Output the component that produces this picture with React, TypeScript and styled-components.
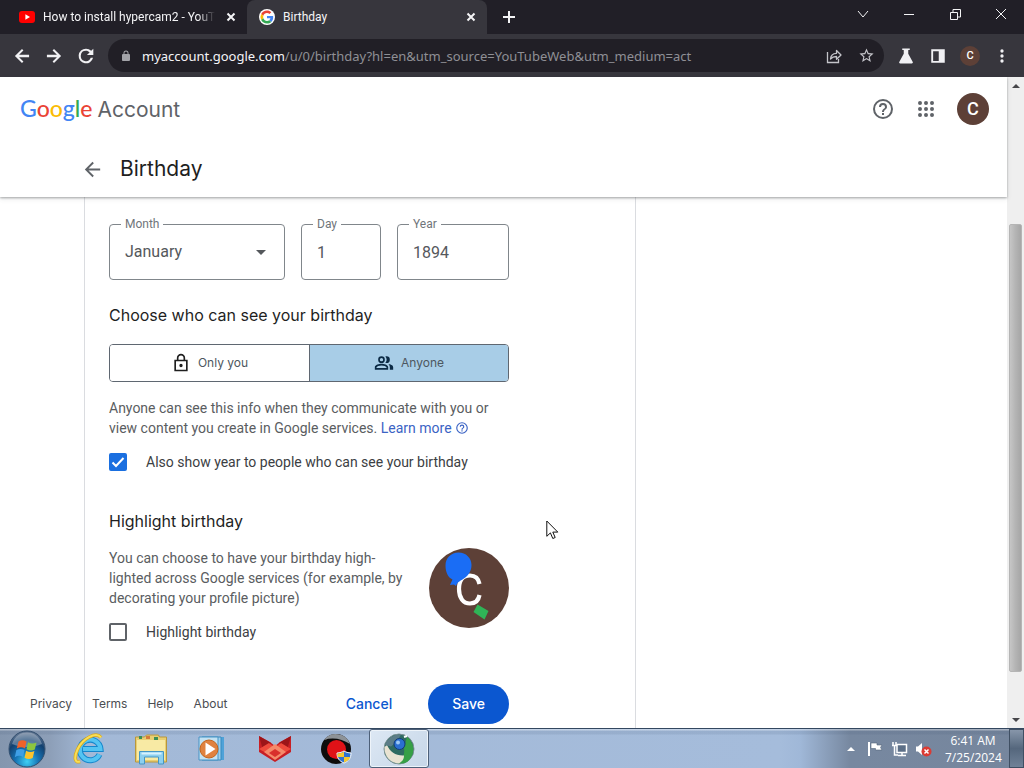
import React, { useState } from 'react';
import styled, { createGlobalStyle, css } from 'styled-components';

const GlobalStyle = createGlobalStyle`
  *, *::before, *::after { box-sizing: border-box; }
  body { margin: 0; background: #fff; }
  button, input, select { font: inherit; color: inherit; }
  button { border: 0; padding: 0; background: none; cursor: pointer; }
  svg { display: block; flex: none; }
  h1, h2, p { margin: 0; font-weight: 400; }
  a { color: inherit; text-decoration: none; }
`;

const chromeFont = `"Noto Sans", "Open Sans", sans-serif`;
const clockFont = `"Open Sans", "Noto Sans", sans-serif`;
const pageFont = `Inter, Roboto, sans-serif`;
const formFont = `Roboto, Inter, sans-serif`;

const Desktop = styled.div`
  display: flex;
  flex-direction: column;
  height: 100vh;
  overflow: hidden;
  font-family: ${pageFont};
`;

/* ---------- browser chrome ---------- */

const TabStrip = styled.div`
  display: flex;
  flex: none;
  height: 34px;
  background: #211f27;
  color: #f4f4f6;
  font: 12px/16px ${formFont};
`;

const Tab = styled.div<{ $active?: boolean }>`
  display: flex;
  align-items: center;
  gap: 8px;
  flex: 0 1 240px;
  min-width: 0;
  padding: 0 8px 0 12px;
  border-radius: 8px 8px 0 0;
  background: ${p => (p.$active ? '#37363d' : 'transparent')};
  ${p => !p.$active && css`margin-left: 7px;`}
`;

const TabTitle = styled.span<{ $fade?: boolean }>`
  flex: 1;
  min-width: 0;
  overflow: hidden;
  white-space: nowrap;
  ${p => p.$fade && css`mask-image: linear-gradient(90deg, #000 90%, transparent);`}
`;

const TabClose = styled.button`
  display: grid;
  place-items: center;
  width: 16px;
  height: 16px;
`;

const NewTab = styled.button`
  display: grid;
  place-items: center;
  width: 28px;
  height: 34px;
  margin-left: 8px;
`;

const WindowControls = styled.div`
  display: flex;
  margin-left: auto;
`;

const WindowButton = styled.button`
  display: grid;
  place-items: center;
  width: 46px;
  height: 28px;
`;

const Toolbar = styled.div`
  display: flex;
  align-items: center;
  flex: none;
  height: 43px;
  padding: 0 6px;
  background: #37363d;
  color: #f1f1f4;
`;

const ToolButton = styled.button<{ $muted?: boolean }>`
  display: grid;
  place-items: center;
  flex: none;
  width: 32px;
  height: 32px;
  color: ${p => (p.$muted ? '#c4c4c9' : 'inherit')};
`;

const Omnibox = styled.div`
  display: flex;
  align-items: center;
  flex: 1;
  min-width: 0;
  height: 33px;
  margin: 0 6px;
  padding: 0 2px 0 12px;
  border-radius: 17px;
  background: #211f26;
  color: #a3a3a8;
  font: 13px/20px ${chromeFont};
`;

const Address = styled.span`
  flex: 1;
  min-width: 0;
  margin-left: 10px;
  overflow: hidden;
  white-space: nowrap;
  color: #8f8f95;
`;

const Host = styled.span`
  color: #f4f4f6;
`;

const Avatar = styled.span<{ $size: number }>`
  display: grid;
  place-items: center;
  width: ${p => p.$size}px;
  height: ${p => p.$size}px;
  border-radius: 50%;
  background: #5d4037;
  color: #fff;
  font: 500 ${p => (p.$size > 24 ? 18 : 11)}px/1 ${formFont};
`;

/* ---------- page ---------- */

const Viewport = styled.div`
  display: flex;
  flex: 1;
  min-height: 0;
`;

const Page = styled.div`
  display: flex;
  flex-direction: column;
  flex: 1;
  min-width: 0;
  background: #fff;
`;

const Header = styled.header`
  position: relative;
  flex: none;
  background: #fff;
  box-shadow: 0 1px 2px rgba(60, 64, 67, 0.4), 0 2px 5px rgba(60, 64, 67, 0.12);
`;

const Masthead = styled.div`
  display: flex;
  align-items: center;
  gap: 19px;
  height: 64px;
  padding: 0 18px 0 20px;
  color: #5f6368;
`;

const Brand = styled.a`
  display: flex;
  align-items: baseline;
  gap: 5px;
  margin-right: auto;
  font-size: 21px;
  line-height: 32px;
`;

const Wordmark = styled.span`
  font: 500 23px/32px Lato, sans-serif;
`;

const Letter = styled.span<{ $color: string }>`
  color: ${p => p.$color};
`;

const IconButton = styled.button`
  display: grid;
  place-items: center;
  min-width: 22px;
  height: 32px;
`;

const TitleBar = styled.div`
  display: flex;
  align-items: center;
  gap: 16px;
  height: 56px;
  padding-left: 81px;
  color: #5f6368;
`;

const PageTitle = styled.h1`
  color: #1f1f1f;
  font-size: 21px;
  line-height: 28px;
`;

const Body = styled.div`
  display: grid;
  flex: 1;
  min-height: 0;
  overflow: hidden;
  > * { grid-area: 1 / 1; }
`;

const Card = styled.form`
  width: calc(100% - 84px);
  max-width: 552px;
  margin-left: 84px;
  padding: 27px 24px 4px;
  border: solid #dadce0;
  border-width: 0 1px;
`;

const Column = styled.div`
  display: flex;
  flex-direction: column;
  max-width: 400px;
`;

const Fields = styled.div`
  display: grid;
  grid-template-columns: 176fr 80fr 112fr;
  gap: 16px;
`;

const Field = styled.div`
  position: relative;
  display: flex;
  align-items: center;
  height: 56px;
  border: 1px solid #80868b;
  border-radius: 4px;
  color: #55585c;
  font: 16px/24px ${formFont};
`;

const FieldLabel = styled.label`
  position: absolute;
  top: -9px;
  left: 11px;
  padding: 0 4px;
  background: #fff;
  color: #70757a;
  font-size: 12px;
  line-height: 16px;
`;

const control = css`
  width: 100%;
  height: 100%;
  padding: 0 15px;
  border: 0;
  outline: 0;
  background: none;
  appearance: none;
`;

const TextInput = styled.input`${control}`;
const Select = styled.select`${control}`;

const SelectArrow = styled.svg`
  position: absolute;
  right: 18px;
  pointer-events: none;
`;

const SectionTitle = styled.h2<{ $top: number }>`
  margin-top: ${p => p.$top}px;
  color: #1f1f1f;
  font-size: 16px;
  line-height: 24px;
`;

const Segments = styled.div`
  display: grid;
  grid-template-columns: 1fr 1fr;
  height: 38px;
  margin-top: 17px;
  overflow: hidden;
  border: 1px solid #5f6771;
  border-radius: 4px;
`;

const Segment = styled.button<{ $on: boolean }>`
  display: flex;
  align-items: center;
  justify-content: center;
  gap: 7px;
  background: ${p => (p.$on ? '#a8cde7' : '#fff')};
  color: ${p => (p.$on ? '#0b2a45' : '#1f1f1f')};
  font-size: 12px;
  line-height: 16px;
  & + & { border-left: 1px solid #5f6771; }
`;

const SegmentText = styled.span`
  color: #4d5760;
`;

const Copy = styled.p<{ $top?: number }>`
  margin-top: ${p => p.$top ?? 0}px;
  color: #5a5d61;
  font: 14px/20px ${formFont};
`;

const LearnMore = styled.a`
  display: inline-flex;
  align-items: center;
  gap: 3px;
  color: #3b63c4;
  white-space: nowrap;
`;

const CheckRow = styled.div`
  display: flex;
  align-items: center;
  gap: 19px;
  height: 24px;
  margin-top: 12px;
  color: #3c4043;
  font: 14px/20px ${formFont};
`;

const CheckBox = styled.span`
  display: grid;
  flex: none;
  width: 18px;
  height: 18px;
  > * { grid-area: 1 / 1; }
  svg { pointer-events: none; }
`;

const CheckInput = styled.input`
  width: 18px;
  height: 18px;
  margin: 0;
  border: 2px solid #5f6368;
  border-radius: 2px;
  appearance: none;
  &:checked { border-color: #1a6fe0; background: #1a6fe0; }
  &:not(:checked) + svg { visibility: hidden; }
`;

const HighlightRow = styled.div`
  display: flex;
  justify-content: space-between;
  margin-top: 15px;
`;

const Actions = styled.div`
  display: flex;
  justify-content: flex-end;
  gap: 24px;
  margin-top: 40px;
  font-weight: 500;
  font-size: 14px;
  line-height: 20px;
`;

const CancelButton = styled.button`
  height: 40px;
  padding: 0 12px;
  color: #0b57d0;
`;

const SaveButton = styled.button`
  height: 40px;
  padding: 0 24px;
  border-radius: 20px;
  background: #0b57d0;
  color: #fff;
`;

const FooterLinks = styled.nav`
  display: flex;
  align-self: end;
  justify-self: start;
  gap: 20px;
  padding: 0 0 16px 30px;
  color: #4b4e52;
  font: 12px/16px ${pageFont};
`;

const ScrollBar = styled.div`
  display: flex;
  flex-direction: column;
  flex: none;
  width: 17px;
  background: #efefef;
  color: #46464a;
`;

const ScrollArrow = styled.button`
  display: grid;
  place-items: center;
  height: 17px;
`;

const ScrollTrack = styled.div`
  display: grid;
  flex: 1;
  grid-template-rows: 130fr 448fr 39fr;
`;

const ScrollThumb = styled.div`
  grid-row: 2;
  margin: 0 2px;
  border: 1px solid #b5b5b5;
  border-radius: 2px;
  background: linear-gradient(90deg, #c6c6c6, #b4b4b4 50%, #a6a6a6);
`;

const Pointer = styled.svg`
  position: absolute;
  top: 520px;
  left: 546px;
  pointer-events: none;
`;

/* ---------- taskbar ---------- */

const Taskbar = styled.div`
  display: flex;
  align-items: stretch;
  flex: none;
  height: 40px;
  border-top: 1px solid #33475f;
  background:
    linear-gradient(180deg, rgba(255, 255, 255, 0.35) 0 1px, rgba(60, 80, 110, 0.12) 2px 5px, transparent 6px),
    linear-gradient(90deg, #8496ae, #8d9fb8 50px, #a3b9d7 90px, #a5bcdb 780px, #a0b8d8 800px, #7788a0 850px, #76869d);
`;

const StartButton = styled.button`
  display: grid;
  place-items: center;
  width: 54px;
  margin-right: 5px;
`;

const TaskButton = styled.button<{ $active?: boolean }>`
  display: grid;
  place-items: center;
  width: 60px;
  margin-right: 2px;
  ${p =>
    p.$active &&
    css`
      border: 1px solid #4d6079;
      border-radius: 3px;
      background: linear-gradient(135deg, #dde8f4, #c6d6e8);
      box-shadow: inset 0 0 0 1px #eef4fa;
    `}
`;

const Tray = styled.div`
  display: flex;
  align-items: center;
  gap: 8px;
  margin-left: auto;
`;

const TrayButton = styled.button`
  display: grid;
  place-items: center;
  width: 16px;
  height: 24px;
`;

const Clock = styled.time`
  width: 56px;
  margin-left: 6px;
  color: #fff;
  font: 12px/17px ${clockFont};
  text-align: center;
  white-space: nowrap;
`;

const ShowDesktop = styled.button`
  align-self: stretch;
  width: 15px;
  border: 1px solid #3f4f63;
  background: linear-gradient(180deg, #8796aa, #55677d 50%, #708197);
`;

/* ---------- icons ---------- */

type GlyphProps = { d: string; size?: number; box?: number };
const Glyph = ({ d, size = 20, box = 24 }: GlyphProps) => (
  <svg width={size} height={size} viewBox={`0 0 ${box} ${box}`} fill="currentColor" aria-hidden="true">
    <path d={d} />
  </svg>
);

type StrokeProps = { d: string; size: number; w?: number };
const Stroke = ({ d, size, w = 1 }: StrokeProps) => (
  <svg width={size} height={size} viewBox={`0 0 ${size} ${size}`} fill="none" stroke="currentColor" strokeWidth={w} aria-hidden="true">
    <path d={d} />
  </svg>
);

const paths = {
  back: 'M20 11H7.83l5.59-5.59L12 4l-8 8 8 8 1.41-1.41L7.83 13H20v-2z',
  backBold: 'M20.500 10.500H8.500l5.200-5.200L12 3.500 3.500 12l8.500 8.500 1.700-1.800-5.200-5.200h12z',
  forwardBold: 'M3.500 10.500h12l-5.200-5.200L12 3.500l8.500 8.500-8.500 8.500-1.700-1.800 5.200-5.200h-12z',
  reload: 'M17.650 6.350A7.960 7.960 0 0 0 12 4a8 8 0 1 0 7.730 10h-2.600A5.600 5.600 0 1 1 12 6.400c1.540 0 2.900.640 3.900 1.700L13 11h7V4l-2.350 2.350z',
  lock: 'M18 8h-1V6A5 5 0 0 0 7 6v2H6a2 2 0 0 0-2 2v10c0 1.1.9 2 2 2h12a2 2 0 0 0 2-2V10a2 2 0 0 0-2-2zM8.900 6a3.100 3.100 0 0 1 6.200 0v2H8.900z',
  star: 'M22 9.24l-7.19-.62L12 2 9.19 8.630 2 9.240l5.460 4.730L5.820 21 12 17.270 18.180 21l-1.630-7.030L22 9.240zM12 15.400l-3.760 2.270 1-4.280-3.320-2.880 4.380-.380L12 6.100l1.710 4.040 4.380.380-3.320 2.880 1 4.280L12 15.400z',
  flask: 'M7 2h10v2h-2v5l6 11c.5 1-.2 2-1.300 2H4.300C3.200 22 2.500 21 3 20L9 9V4H7z',
  panel: 'M3 3h18v18H3zM5.500 5.500v13H13v-13z',
  dots: 'M12 8a2 2 0 1 0 0-4 2 2 0 0 0 0 4zm0 2a2 2 0 1 0 0 4 2 2 0 0 0 0-4zm0 6a2 2 0 1 0 0 4 2 2 0 0 0 0-4z',
  help: 'M11 18h2v-2h-2v2zm1-16a10 10 0 1 0 0 20 10 10 0 0 0 0-20zm0 18a8 8 0 1 1 0-16 8 8 0 0 1 0 16zm0-14a4 4 0 0 0-4 4h2a2 2 0 1 1 4 0c0 2-3 1.750-3 5h2c0-2.250 3-2.500 3-5a4 4 0 0 0-4-4z',
  apps: 'M6 8a2 2 0 1 0 0-4 2 2 0 0 0 0 4zm6 0a2 2 0 1 0 0-4 2 2 0 0 0 0 4zm6 0a2 2 0 1 0 0-4 2 2 0 0 0 0 4zM6 14a2 2 0 1 0 0-4 2 2 0 0 0 0 4zm6 0a2 2 0 1 0 0-4 2 2 0 0 0 0 4zm6 0a2 2 0 1 0 0-4 2 2 0 0 0 0 4zM6 20a2 2 0 1 0 0-4 2 2 0 0 0 0 4zm6 0a2 2 0 1 0 0-4 2 2 0 0 0 0 4zm6 0a2 2 0 1 0 0-4 2 2 0 0 0 0 4z',
  lockOutline: 'M18 8h-1V6A5 5 0 0 0 7 6v2H4v14h16V8h-2zM9 6a3 3 0 0 1 6 0v2H9V6zm9 14H6V10h12v10zm-6-3a2 2 0 1 0 0-4 2 2 0 0 0 0 4z',
  people: 'M9 12a4 4 0 1 0 0-8 4 4 0 0 0 0 8zm0-6a2 2 0 1 1 0 4 2 2 0 0 1 0-4zm0 7c-2.670 0-8 1.340-8 4v3h16v-3c0-2.660-5.330-4-8-4zm6 5H3v-.990C3.200 16.290 6.300 15 9 15s5.800 1.290 6 2v1zM15 12a4 4 0 1 0 0-8c-.470 0-.910.100-1.330.240a5.980 5.980 0 0 1 0 7.520c.420.140.860.240 1.330.240zM17 13.300c1.200.900 2 2.100 2 3.700v3h4v-3c0-2.180-3.580-3.400-6-3.700z',
};

const YouTubeIcon = () => (
  <svg width="16" height="16" viewBox="0 0 16 16" aria-hidden="true">
    <rect y="2" width="16" height="12" rx="3" fill="#f00" />
    <path d="M6.400 5.200v5.600L11 8z" fill="#fff" />
  </svg>
);

const GoogleIcon = () => (
  <svg width="16" height="16" viewBox="0 0 48 48" aria-hidden="true">
    <circle cx="24" cy="24" r="24" fill="#fff" />
    <g transform="translate(4.500 4.500) scale(.81)">
      <path fill="#ea4335" d="M24 9.500c3.540 0 6.710 1.220 9.210 3.600l6.850-6.850C35.900 2.380 30.470 0 24 0 14.620 0 6.510 5.380 2.560 13.220l7.980 6.190C12.430 13.720 17.740 9.500 24 9.500z" />
      <path fill="#4285f4" d="M46.980 24.550c0-1.570-.150-3.090-.380-4.550H24v9.020h12.940c-.580 2.960-2.260 5.480-4.780 7.180l7.730 6c4.510-4.180 7.090-10.360 7.090-17.650z" />
      <path fill="#fbbc05" d="M10.530 28.590a14.500 14.500 0 0 1 0-9.180l-7.980-6.190a24 24 0 0 0 0 21.560l7.980-6.190z" />
      <path fill="#34a853" d="M24 48c6.480 0 11.930-2.130 15.890-5.810l-7.730-6c-2.150 1.450-4.920 2.300-8.160 2.300-6.260 0-11.570-4.220-13.470-9.910l-7.980 6.190C6.510 42.620 14.620 48 24 48z" />
    </g>
  </svg>
);

const ShareIcon = () => (
  <svg width="18" height="18" viewBox="0 0 18 18" fill="none" stroke="currentColor" strokeWidth="1.300" aria-hidden="true">
    <path d="M2.500 5v10.500h11V12" />
    <path d="M5.500 12c.300-3.800 2.600-5.600 6-5.700V3.500L16 8l-4.500 4.300V9.500c-2.700 0-4.500.700-6 2.500z" strokeLinejoin="round" />
  </svg>
);

const BirthdayAvatar = () => (
  <svg width="80" height="80" viewBox="0 0 80 80" role="img" aria-label="Profile picture with decorations">
    <circle cx="40" cy="40" r="40" fill="#5d4037" />
    <path d="M50.500 36C49.500 30.500 46 27.500 41 27.500c-7 0-11 5-11 13.500S34 55.500 41 55.500c5 0 8.500-3 9.500-8.500" fill="none" stroke="#fff" strokeWidth="4.200" />
    <path d="M29.500 4.500c7.500 0 13 5.500 13 12.500 0 7-4 11.500-9 14.500-4 2.300-5 3-6.500 6.500l-2-1.500-4 .500 2.500-5.500C19 29.500 16.500 24 16.500 17.500c0-7.500 5.500-13 13-13z" fill="#1a6df5" />
    <path d="M48.500 56.500l11 6.500-4 8.500L44.500 64z" fill="#2fb457" />
  </svg>
);

const StartOrb = () => (
  <svg width="38" height="38" viewBox="0 0 38 38" aria-hidden="true">
    <defs>
      <radialGradient id="orb" cx=".5" cy=".85" r=".8">
        <stop offset="0" stopColor="#3fd0f4" />
        <stop offset=".4" stopColor="#1673b4" />
        <stop offset=".75" stopColor="#12406f" />
        <stop offset="1" stopColor="#5d7390" />
      </radialGradient>
    </defs>
    <circle cx="19" cy="19" r="18" fill="url(#orb)" stroke="#34506f" />
    <path d="M4 14C7 5 13 2.500 19 2.500S31 5 34 14c-9 4-21 4-30 0z" fill="#fff" opacity=".3" />
    <path d="M10.500 11.500c3-1.800 5.500-1.500 8 0L17 18.500c-2.600-1.600-5.200-1.700-8.200 0z" fill="#f0622a" />
    <path d="M20 12.300c2.700 1.600 5.300 1.700 8.500.2l-1.700 7c-3 1.400-5.600 1.200-8.300-.300z" fill="#8cc63f" />
    <path d="M8.400 20.100c3-1.600 5.600-1.500 8.200 0L15 27c-2.600-1.600-5.300-1.500-8.200.200z" fill="#3f9fe6" />
    <path d="M18.100 20.800c2.700 1.500 5.300 1.700 8.300.300l-1.700 7c-3 1.400-5.600 1.200-8.200-.300z" fill="#fcc32c" />
  </svg>
);

const ExplorerE = () => (
  <svg width="34" height="34" viewBox="0 0 34 34" fill="none" aria-hidden="true">
    <path d="M27.500 22.500a10.300 10.300 0 1 1 1-5.500H11" stroke="#1587cc" strokeWidth="6" />
    <path d="M27.500 22.500a10.300 10.300 0 1 1 1-5.500H11" stroke="#54c4f2" strokeWidth="4" />
    <path d="M29 5.500C24-.500 11 6 5.500 17.500 2 25 2.500 31.500 8 29.500" stroke="#d9a91c" strokeWidth="3.500" />
    <path d="M29 5.500C24-.500 11 6 5.500 17.500 2 25 2.500 31.500 8 29.500" stroke="#f9de57" strokeWidth="2" />
  </svg>
);

const FolderIcon = () => (
  <svg width="34" height="34" viewBox="0 0 34 34" aria-hidden="true">
    <path d="M1.500 5h9l2-2h12l1 2h7v25h-31z" fill="#e9cf72" stroke="#b8973c" />
    <path d="M3 8h28v20H3z" fill="#f8eaa4" />
    <path d="M5 4h3v3H5zM20 5h4v3h-4z" fill="#3c8f55" />
    <path d="M12 4h4v3h-4z" fill="#d67b3c" />
    <path d="M5.500 32V19.500h24V32h-5v-7h-14v7z" fill="#8dd0ef" stroke="#4496c5" />
    <path d="M7.500 21.500h20" stroke="#d7f2ff" strokeWidth="2" />
  </svg>
);

const MediaIcon = () => (
  <svg width="34" height="34" viewBox="0 0 34 34" aria-hidden="true">
    <path d="M10 5h18v23H10z" fill="#4fa2d8" />
    <path d="M6 5h19v23H6z" fill="#9fd0ec" stroke="#3789be" />
    <path d="M3 5h19v23H3z" fill="#c3e2f3" stroke="#4693c4" />
    <circle cx="13" cy="17" r="9" fill="#e0823f" stroke="#c4651c" />
    <path d="M9.500 10.500v13L19.500 17z" fill="#fff" />
  </svg>
);

const FoxIcon = () => (
  <svg width="34" height="34" viewBox="0 0 34 34" aria-hidden="true">
    <path d="M1 4l11 6 5 4 5-4 11-6v16L17 30 1 20z" fill="#c81f24" />
    <path d="M1 4l12 7-8 7zM33 4l-12 7 8 7z" fill="#9d1519" />
    <path d="M1 17l10-6 6 5 6-5 10 6-16 9z" fill="#ef4a3c" />
    <path d="M6 20l11-8 11 8-11 8z" fill="#f58a6a" />
    <path d="M11 21l6-4 6 4-6 4z" fill="#d9302c" />
  </svg>
);

const RecorderIcon = () => (
  <svg width="34" height="34" viewBox="0 0 34 34" aria-hidden="true">
    <circle cx="16" cy="17" r="15" fill="#0e0c0c" />
    <path d="M4 8a15 15 0 0 1 26 4c-8-5-17-7-26-4z" fill="#8d9297" />
    <circle cx="16.500" cy="17.500" r="9.500" fill="#e01217" />
    <path d="M24 19c2 1.200 4 1.800 7 2 0 5-2 8-7 10-5-2-7-5-7-10 3-.200 5-.800 7-2z" fill="#2d72d2" stroke="#fff" />
    <path d="M24 19.700V25h-6.300c-.200-1.200-.300-2.300-.200-3.500 2.500-.200 4.500-.600 6.500-1.800zM24 25h6.200c-.800 2.500-2.800 4.300-6.200 5.500z" fill="#f6c931" />
  </svg>
);

const CameraOrbIcon = () => (
  <svg width="34" height="34" viewBox="0 0 34 34" aria-hidden="true">
    <circle cx="17" cy="17" r="15" fill="#2f6b62" stroke="#7c9295" />
    <path d="M25 5c8 6 9 18 0 25-4 2-8 1.500-9 1 5-4 7-9 6-15z" fill="#36a046" />
    <path d="M2.500 15C2 24 8 31 17 31.500c4-2.500 5-5 5-8C14 24 8 20 5 13z" fill="#e9e3d2" />
    <path d="M3 13C6 5 13 2 19 2.500l-4 7-6 5z" fill="#5c7d88" />
    <circle cx="17.500" cy="12" r="5.500" fill="#2b6fd0" stroke="#123a78" />
    <circle cx="16" cy="10.500" r="2" fill="#9cc7f5" />
    <path d="M22 5l3-1" stroke="#fff" strokeWidth="2" />
  </svg>
);

const FlagIcon = () => (
  <svg width="16" height="18" viewBox="0 0 16 18" aria-hidden="true">
    <path d="M2 2v14" stroke="#fff" strokeWidth="2" />
    <path d="M4 3h6v2h5l-1.500 2.500L15 10H8.500V8.500H4z" fill="#fff" stroke="#56667b" strokeWidth=".6" />
  </svg>
);

const NetworkIcon = () => (
  <svg width="17" height="18" viewBox="0 0 17 18" fill="none" stroke="#fff" strokeWidth="1.500" aria-hidden="true">
    <path d="M6 4.500h9.500v8H6z" fill="#5c6f87" />
    <path d="M7 15.500h8M11 12.500v3M2 2v3M5 2v3M1 5.500h5M3.500 6v9H7" />
  </svg>
);

const VolumeIcon = () => (
  <svg width="17" height="18" viewBox="0 0 17 18" aria-hidden="true">
    <path d="M1 6.500h2L7 3v12l-4-3.500H1z" fill="#fff" />
    <circle cx="11.500" cy="11.500" r="5" fill="#dc3b33" />
    <path d="M9.500 9.500l4 4m0-4l-4 4" stroke="#fff" strokeWidth="1.500" />
  </svg>
);

const tasks = [
  { label: 'Internet Explorer', Icon: ExplorerE },
  { label: 'Windows Explorer', Icon: FolderIcon },
  { label: 'Media Player', Icon: MediaIcon },
  { label: 'Fox', Icon: FoxIcon },
  { label: 'Recorder', Icon: RecorderIcon },
  { label: 'HyperCam', Icon: CameraOrbIcon, active: true },
];

const wordmark = [
  ['G', '#4285f4'], ['o', '#ea4335'], ['o', '#fbbc04'],
  ['g', '#4285f4'], ['l', '#34a853'], ['e', '#ea4335'],
];

type CheckProps = { id: string; label: string; checked: boolean; onChange: (v: boolean) => void };
const Check = ({ id, label, checked, onChange }: CheckProps) => (
  <CheckRow>
    <CheckBox>
      <CheckInput id={id} type="checkbox" checked={checked} onChange={e => onChange(e.target.checked)} />
      <svg width="18" height="18" viewBox="0 0 18 18" fill="none" stroke="#fff" strokeWidth="2" aria-hidden="true">
        <path d="M3.500 9.500l3.500 3.500 7.500-8" />
      </svg>
    </CheckBox>
    <label htmlFor={id}>{label}</label>
  </CheckRow>
);

export default function App() {
  const [audience, setAudience] = useState<'me' | 'anyone'>('anyone');
  const [showYear, setShowYear] = useState(true);
  const [highlight, setHighlight] = useState(false);

  return (
    <Desktop>
      <GlobalStyle />
      <TabStrip>
        <Tab>
          <YouTubeIcon />
          <TabTitle $fade>How to install hypercam2 - YouTube</TabTitle>
          <TabClose aria-label="Close tab"><Stroke size={10} w={2} d="M1.500 1.500l7 7m0-7l-7 7" /></TabClose>
        </Tab>
        <Tab $active>
          <GoogleIcon />
          <TabTitle>Birthday</TabTitle>
          <TabClose aria-label="Close tab"><Stroke size={10} w={2} d="M1.500 1.500l7 7m0-7l-7 7" /></TabClose>
        </Tab>
        <NewTab aria-label="New tab"><Stroke size={12} w={2} d="M6 0v12M0 6h12" /></NewTab>
        <WindowControls>
          <WindowButton aria-label="Search tabs"><Stroke size={12} d="M1 3l5 6 5-6" /></WindowButton>
          <WindowButton aria-label="Minimize"><Stroke size={10} d="M0 5.500h10" /></WindowButton>
          <WindowButton aria-label="Restore"><Stroke size={11} d="M.5 3.500h7v7h-7zM3 3V.5h7.500V8H8" /></WindowButton>
          <WindowButton aria-label="Close"><Stroke size={12} d="M1 1l10 10m0-10L1 11" /></WindowButton>
        </WindowControls>
      </TabStrip>
      <Toolbar>
        <ToolButton aria-label="Back"><Glyph d={paths.backBold} size={20} /></ToolButton>
        <ToolButton aria-label="Forward"><Glyph d={paths.forwardBold} size={20} /></ToolButton>
        <ToolButton aria-label="Reload"><Glyph d={paths.reload} size={22} /></ToolButton>
        <Omnibox>
          <Glyph d={paths.lock} size={12} />
          <Address>
            <Host>myaccount.google.com</Host>/u/0/birthday?hl=en&amp;utm_source=YouTubeWeb&amp;utm_medium=act
          </Address>
          <ToolButton $muted aria-label="Share"><ShareIcon /></ToolButton>
          <ToolButton $muted aria-label="Bookmark"><Glyph d={paths.star} size={17} /></ToolButton>
        </Omnibox>
        <ToolButton aria-label="Labs"><Glyph d={paths.flask} size={18} /></ToolButton>
        <ToolButton aria-label="Side panel"><Glyph d={paths.panel} size={18} /></ToolButton>
        <ToolButton aria-label="Profile"><Avatar $size={20}>C</Avatar></ToolButton>
        <ToolButton aria-label="Menu"><Glyph d={paths.dots} size={20} /></ToolButton>
      </Toolbar>

      <Viewport>
        <Page>
          <Header>
            <Masthead>
              <Brand href="#home">
                <Wordmark>
                  {wordmark.map(([ch, color], i) => <Letter key={i} $color={color}>{ch}</Letter>)}
                </Wordmark>
                <span>Account</span>
              </Brand>
              <IconButton aria-label="Help"><Glyph d={paths.help} size={24} /></IconButton>
              <IconButton aria-label="Apps"><Glyph d={paths.apps} size={24} /></IconButton>
              <IconButton aria-label="Account"><Avatar $size={32}>C</Avatar></IconButton>
            </Masthead>
            <TitleBar>
              <IconButton aria-label="Go back"><Glyph d={paths.back} size={23} /></IconButton>
              <PageTitle>Birthday</PageTitle>
            </TitleBar>
          </Header>
          <Body>
            <Card onSubmit={e => e.preventDefault()}>
              <Column>
                <Fields>
                  <Field>
                    <FieldLabel htmlFor="month">Month</FieldLabel>
                    <Select id="month" defaultValue="January">
                      <option>January</option>
                      <option>February</option>
                    </Select>
                    <SelectArrow width="10" height="5" viewBox="0 0 10 5"><path d="M0 0h10L5 5z" fill="#55585c" /></SelectArrow>
                  </Field>
                  <Field>
                    <FieldLabel htmlFor="day">Day</FieldLabel>
                    <TextInput id="day" defaultValue="1" />
                  </Field>
                  <Field>
                    <FieldLabel htmlFor="year">Year</FieldLabel>
                    <TextInput id="year" defaultValue="1894" />
                  </Field>
                </Fields>
                <SectionTitle $top={23}>Choose who can see your birthday</SectionTitle>
                <Segments>
                  <Segment type="button" $on={audience === 'me'} aria-pressed={audience === 'me'} onClick={() => setAudience('me')}>
                    <Glyph d={paths.lockOutline} size={20} /><SegmentText>Only you</SegmentText>
                  </Segment>
                  <Segment type="button" $on={audience === 'anyone'} aria-pressed={audience === 'anyone'} onClick={() => setAudience('anyone')}>
                    <Glyph d={paths.people} size={20} /><SegmentText>Anyone</SegmentText>
                  </Segment>
                </Segments>
                <Copy $top={16}>
                  Anyone can see this info when they communicate with you or<br />
                  view content you create in Google services.{' '}
                  <LearnMore href="#learn">Learn more<Glyph d={paths.help} size={14} /></LearnMore>
                </Copy>
                <Check id="show-year" label="Also show year to people who can see your birthday" checked={showYear} onChange={setShowYear} />
                <SectionTitle $top={35}>Highlight birthday</SectionTitle>
                <HighlightRow>
                  <div>
                    <Copy>
                      You can choose to have your birthday high-<br />
                      lighted across Google services (for example, by<br />
                      decorating your profile picture)
                    </Copy>
                    <Check id="highlight" label="Highlight birthday" checked={highlight} onChange={setHighlight} />
                  </div>
                  <BirthdayAvatar />
                </HighlightRow>
                <Actions>
                  <CancelButton type="button">Cancel</CancelButton>
                  <SaveButton type="submit">Save</SaveButton>
                </Actions>
              </Column>
            </Card>
            <FooterLinks>
              <a href="#privacy">Privacy</a>
              <a href="#terms">Terms</a>
              <a href="#help">Help</a>
              <a href="#about">About</a>
            </FooterLinks>
          </Body>
        </Page>
        <ScrollBar>
          <ScrollArrow aria-label="Scroll up"><Glyph box={8} size={8} d="M0 6h8L4 2z" /></ScrollArrow>
          <ScrollTrack><ScrollThumb /></ScrollTrack>
          <ScrollArrow aria-label="Scroll down"><Glyph box={8} size={8} d="M0 2h8L4 6z" /></ScrollArrow>
        </ScrollBar>
      </Viewport>

      <Taskbar>
        <StartButton aria-label="Start"><StartOrb /></StartButton>
        {tasks.map(({ label, Icon, active }) => (
          <TaskButton key={label} $active={active} aria-label={label}><Icon /></TaskButton>
        ))}
        <Tray>
          <TrayButton aria-label="Show hidden icons"><svg width="8" height="4" viewBox="0 0 8 4"><path d="M0 4h8L4 0z" fill="#fff" /></svg></TrayButton>
          <TrayButton aria-label="Action center"><FlagIcon /></TrayButton>
          <TrayButton aria-label="Network"><NetworkIcon /></TrayButton>
          <TrayButton aria-label="Volume"><VolumeIcon /></TrayButton>
          <Clock>6:41 AM<br />7/25/2024</Clock>
          <ShowDesktop aria-label="Show desktop" />
        </Tray>
      </Taskbar>

      <Pointer width="13" height="20" viewBox="0 0 13 20" aria-hidden="true">
        <path d="M.8 1v15.300l3.600-3.400 2.400 5.600 2.400-1-2.400-5.400h5z" fill="#fff" stroke="#111" />
      </Pointer>
    </Desktop>
  );
}
